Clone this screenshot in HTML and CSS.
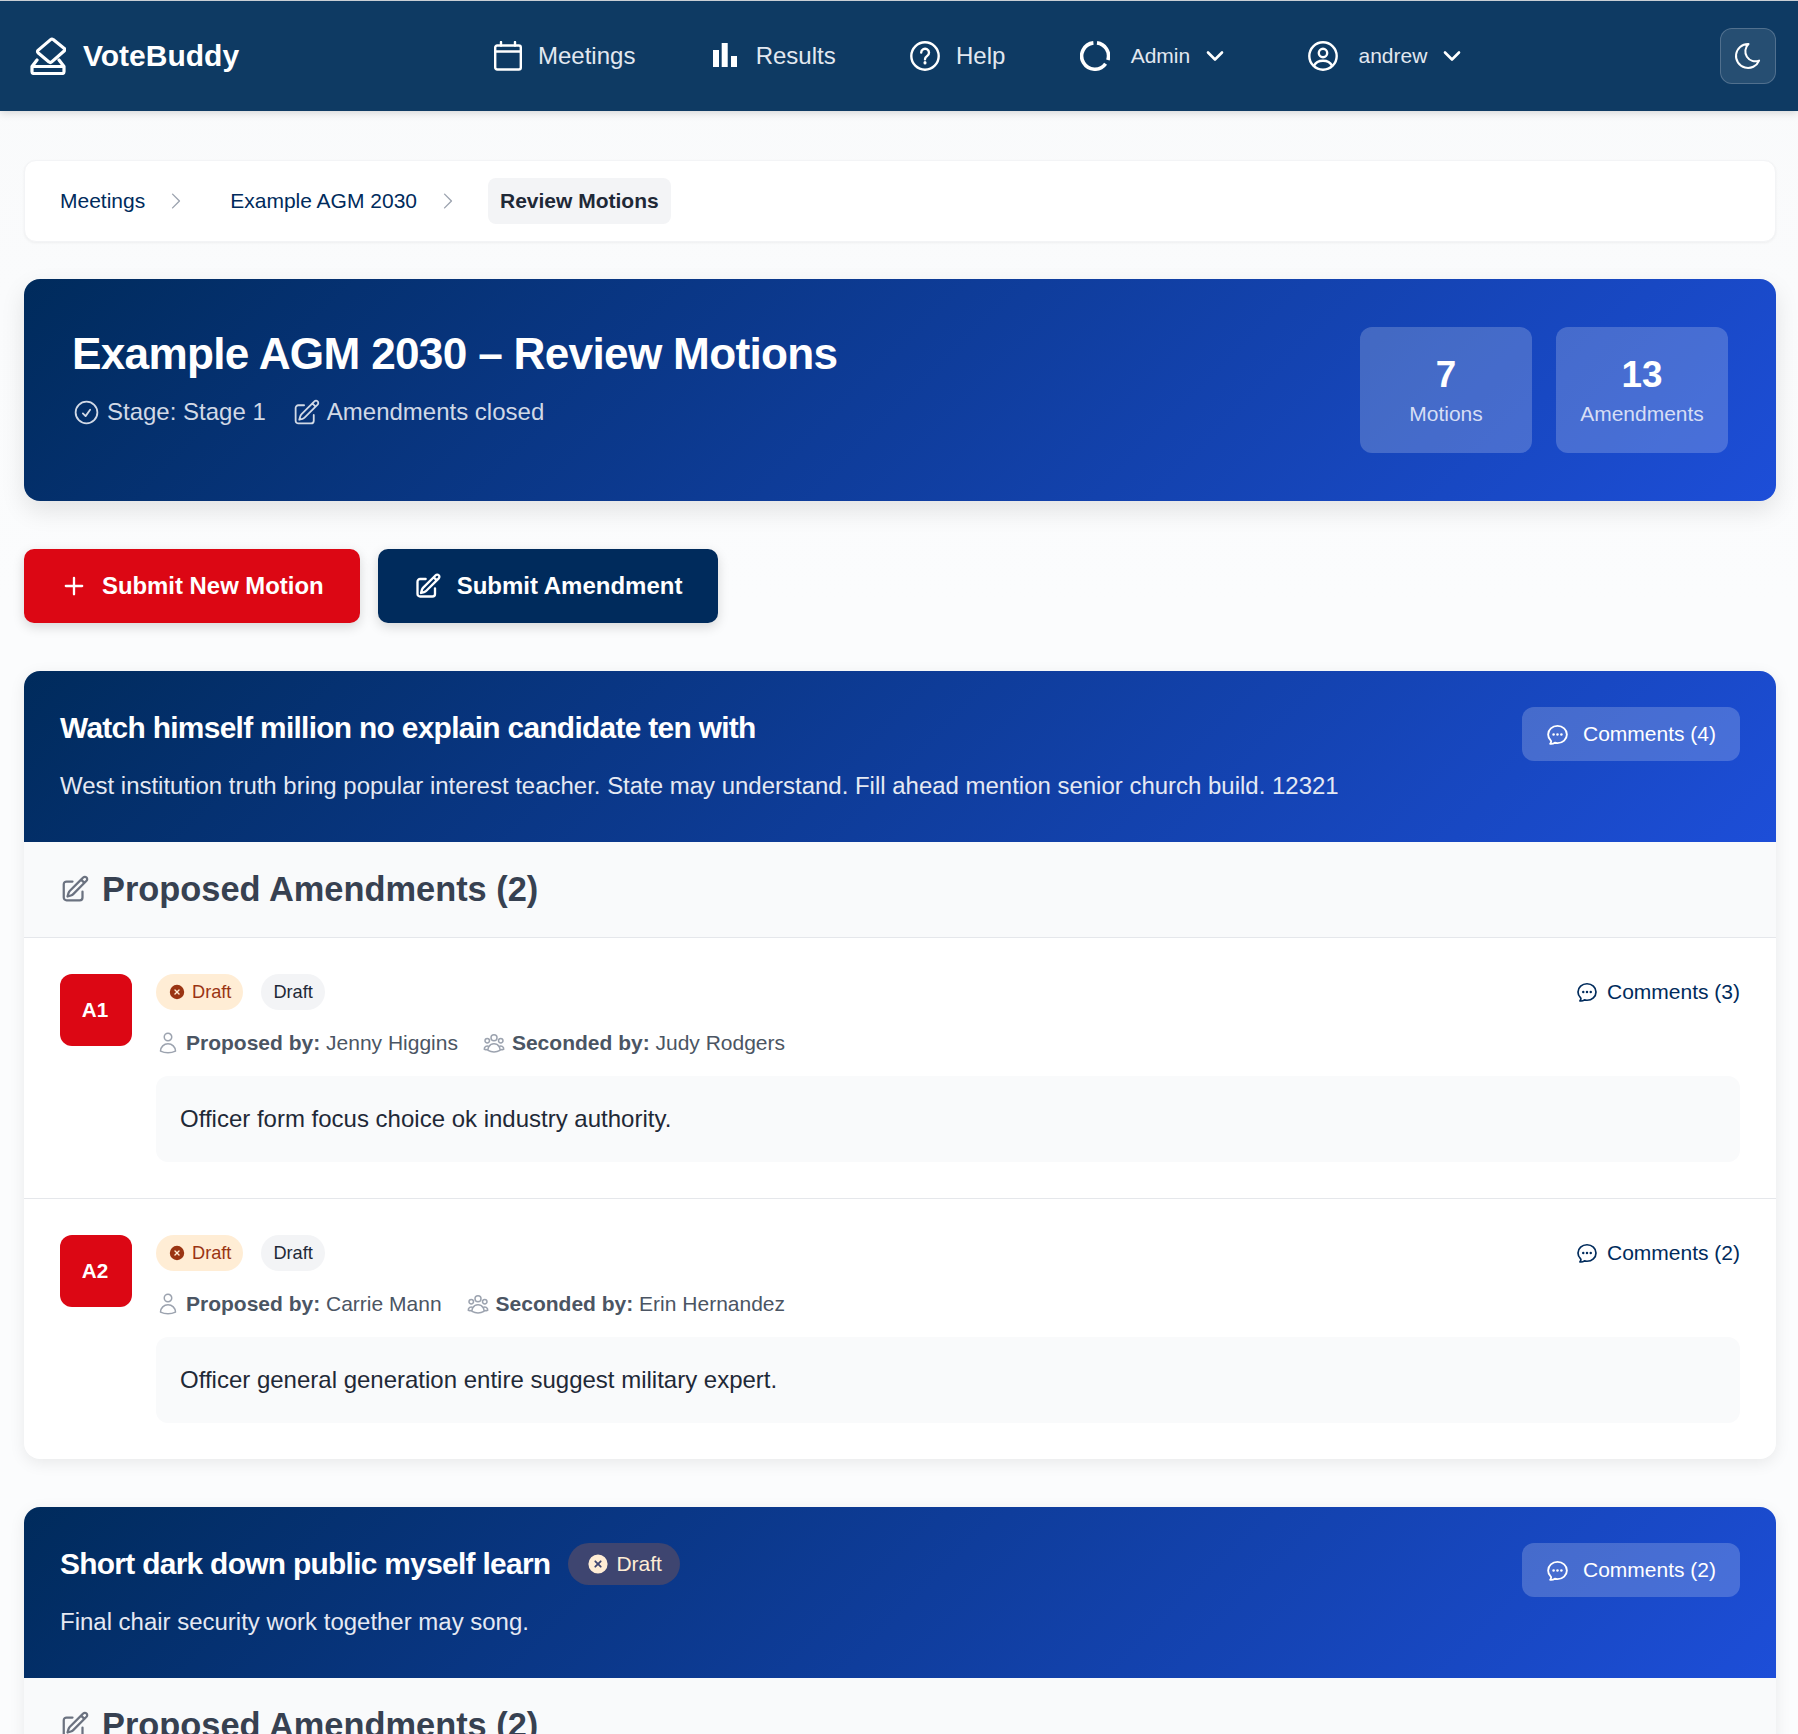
FILE: index.html
```html
<!DOCTYPE html>
<html lang="en">
<head>
<meta charset="utf-8">
<title>VoteBuddy</title>
<link rel="stylesheet" href="styles.css">
</head>
<body>
<svg class="sprite" aria-hidden="true">
  <symbol id="i-pencil" viewBox="0 0 24 24"><path d="m16.862 4.487 1.687-1.688a1.875 1.875 0 1 1 2.652 2.652L10.582 16.07a4.5 4.5 0 0 1-1.897 1.13L6 18l.8-2.685a4.5 4.5 0 0 1 1.13-1.897l8.932-8.931Zm0 0L19.5 7.125M18 14v4.75A2.25 2.25 0 0 1 15.75 21H5.25A2.25 2.25 0 0 1 3 18.75V8.25A2.25 2.25 0 0 1 5.25 6H10"/></symbol>
  <symbol id="i-chat" viewBox="0 0 24 24"><path d="M8.625 12a.375.375 0 1 1-.75 0 .375.375 0 0 1 .75 0Zm0 0H8.25m4.125 0a.375.375 0 1 1-.75 0 .375.375 0 0 1 .75 0Zm0 0H12m4.125 0a.375.375 0 1 1-.75 0 .375.375 0 0 1 .75 0Zm0 0h-.375M21 12c0 4.556-4.03 8.25-9 8.25a9.764 9.764 0 0 1-2.555-.337A5.972 5.972 0 0 1 5.41 20.97a5.969 5.969 0 0 1-.474-.065 4.48 4.48 0 0 0 .978-2.025c.09-.457-.133-.901-.467-1.226C3.93 16.178 3 14.189 3 12c0-4.556 4.03-8.25 9-8.25s9 3.694 9 8.25Z"/></symbol>
  <symbol id="i-user" viewBox="0 0 24 24"><path d="M15.75 6a3.75 3.75 0 1 1-7.5 0 3.75 3.75 0 0 1 7.5 0ZM4.501 20.118a7.5 7.5 0 0 1 14.998 0A17.933 17.933 0 0 1 12 21.75c-2.676 0-5.216-.584-7.499-1.632Z"/></symbol>
  <symbol id="i-group" viewBox="0 0 24 24"><path d="M18 18.72a9.094 9.094 0 0 0 3.741-.479 3 3 0 0 0-4.682-2.72m.94 3.198.001.031c0 .225-.012.447-.037.666A11.944 11.944 0 0 1 12 21c-2.17 0-4.207-.576-5.963-1.584A6.062 6.062 0 0 1 6 18.719m12 0a5.971 5.971 0 0 0-.941-3.197m0 0A5.995 5.995 0 0 0 12 12.75a5.995 5.995 0 0 0-5.058 2.772m0 0a3 3 0 0 0-4.681 2.72 8.986 8.986 0 0 0 3.74.477m.94-3.197a5.971 5.971 0 0 0-.94 3.197M15 6.75a3 3 0 1 1-6 0 3 3 0 0 1 6 0Zm6 3a2.25 2.25 0 1 1-4.5 0 2.25 2.25 0 0 1 4.5 0Zm-13.5 0a2.25 2.25 0 1 1-4.5 0 2.25 2.25 0 0 1 4.5 0Z"/></symbol>
  <symbol id="i-x" viewBox="0 0 20 20"><path class="solid" fill-rule="evenodd" d="M10 18a8 8 0 1 0 0-16 8 8 0 0 0 0 16ZM8.28 7.22a.75.75 0 0 0-1.06 1.06L8.94 10l-1.72 1.72a.75.75 0 1 0 1.06 1.06L10 11.06l1.72 1.72a.75.75 0 1 0 1.06-1.06L11.06 10l1.72-1.72a.75.75 0 0 0-1.06-1.06L10 8.94 8.28 7.22Z"/></symbol>
  <symbol id="i-down" viewBox="0 0 24 24"><path d="m5 8.500 7 7 7-7"/></symbol>
  <symbol id="i-right" viewBox="0 0 24 24"><path d="m8.250 4.500 7.500 7.500-7.500 7.500"/></symbol>
</svg>

<header class="navbar">
  <a class="brand">
    <svg class="brand-icon" viewBox="0 0 36 38"><path d="M23.200 2.600 34.300 11.500a1.500 1.500 0 0 1 .1 2.200L21.700 24.900a2 2 0 0 1-2.700 0L8 15.700a1.600 1.600 0 0 1 0-2.300L20.600 2.600a2 2 0 0 1 2.600 0Z"/><path d="M7 23 2 29.500v5.200A1.800 1.800 0 0 0 3.800 36.500h28.400a1.800 1.800 0 0 0 1.800-1.800v-5.200L29 23M2 29.500h32"/></svg>
    <span class="brand-name">VoteBuddy</span>
  </a>
  <nav class="nav-links">
    <a class="nav-link">
      <svg class="nav-icon" viewBox="0 0 30 30"><rect x="3.200" y="4.500" width="25.600" height="24" rx="2"/><path d="M3.200 10.500h25.600M9 1v3.500M23 1v3.500"/></svg>
      Meetings
    </a>
    <a class="nav-link">
      <svg class="nav-icon nav-icon-solid" viewBox="0 0 30 30"><rect x="3" y="9" width="6" height="17"/><rect x="11.700" y="2" width="6" height="24"/><rect x="21" y="15" width="6" height="11"/></svg>
      Results
    </a>
    <a class="nav-link">
      <svg class="nav-icon" viewBox="0 0 30 30"><circle cx="15" cy="15" r="13.700"/><path d="M11.200 11.600a3.900 3.900 0 1 1 5.900 3.400c-1.300.8-2.100 1.600-2.100 3.200"/><path class="dot" d="M15 21.400v.6"/></svg>
      Help
    </a>
    <a class="nav-link nav-drop nav-admin">
      <svg class="nav-icon nav-icon-heavy" viewBox="0 0 30 30"><path d="M17 1.900A13.200 13.200 0 0 1 27.900 19"/><path d="M25.600 22.700A13.200 13.200 0 1 1 13.400 1.900"/></svg>
      Admin
      <svg class="chevron"><use href="#i-down"/></svg>
    </a>
    <a class="nav-link nav-drop">
      <svg class="nav-icon" viewBox="0 0 30 30"><circle cx="15" cy="15" r="13.700"/><circle cx="15" cy="12" r="4.200"/><path d="M6 24.800c1.600-3.400 5-5 9-5s7.400 1.600 9 5"/></svg>
      andrew
      <svg class="chevron"><use href="#i-down"/></svg>
    </a>
  </nav>
  <button class="theme-btn" type="button" aria-label="Toggle theme">
    <svg class="moon" viewBox="0 0 24 24"><path d="M12 3c.132 0 .263 0 .393 0a7.500 7.500 0 0 0 7.920 12.446a9 9 0 1 1 -8.313 -12.454z"/></svg>
  </button>
</header>

<main class="page">
  <nav class="breadcrumb">
    <a class="crumb">Meetings</a>
    <svg class="crumb-sep"><use href="#i-right"/></svg>
    <a class="crumb">Example AGM 2030</a>
    <svg class="crumb-sep"><use href="#i-right"/></svg>
    <span class="crumb crumb-current">Review Motions</span>
  </nav>

  <section class="hero">
    <div class="hero-text">
      <h1 class="hero-title">Example AGM 2030 – Review Motions</h1>
      <div class="hero-meta">
        <span class="hero-meta-item"><svg class="hero-icon" viewBox="0 0 24 24"><path d="M9 12.750 11.250 15 15 9.750M21 12a9 9 0 1 1-18 0 9 9 0 0 1 18 0Z"/></svg>Stage: Stage 1</span>
        <span class="hero-meta-item"><svg class="hero-icon"><use href="#i-pencil"/></svg>Amendments closed</span>
      </div>
    </div>
    <div class="stats">
      <div class="stat"><div class="stat-num">7</div><div class="stat-label">Motions</div></div>
      <div class="stat"><div class="stat-num">13</div><div class="stat-label">Amendments</div></div>
    </div>
  </section>

  <div class="actions">
    <a class="btn btn-red"><svg class="btn-icon" viewBox="0 0 24 24"><path d="M12 5v14m7-7h-14"/></svg>Submit New Motion</a>
    <a class="btn btn-navy"><svg class="btn-icon"><use href="#i-pencil"/></svg>Submit Amendment</a>
  </div>

  <article class="motion">
    <div class="motion-head">
      <div class="motion-info">
        <div class="motion-title-row"><h2 class="motion-title">Watch himself million no explain candidate ten with</h2></div>
        <p class="motion-desc">West institution truth bring popular interest teacher. State may understand. Fill ahead mention senior church build. 12321</p>
      </div>
      <a class="comments-btn"><svg class="comments-icon"><use href="#i-chat"/></svg>Comments (4)</a>
    </div>
    <div class="section-head"><svg class="section-icon"><use href="#i-pencil"/></svg><h3 class="section-title">Proposed Amendments (2)</h3></div>
    <div class="amendment">
      <div class="badge">A1</div>
      <div class="am-body">
        <div class="am-top">
          <span class="pill pill-orange"><svg class="pill-icon"><use href="#i-x"/></svg>Draft</span>
          <span class="pill pill-grey">Draft</span>
          <a class="am-comments"><svg class="am-comments-icon"><use href="#i-chat"/></svg>Comments (3)</a>
        </div>
        <div class="am-meta">
          <span class="am-person"><svg class="person-icon"><use href="#i-user"/></svg><span><b>Proposed by:</b> Jenny Higgins</span></span>
          <span class="am-person"><svg class="person-icon"><use href="#i-group"/></svg><span><b>Seconded by:</b> Judy Rodgers</span></span>
        </div>
        <div class="am-text">Officer form focus choice ok industry authority.</div>
      </div>
    </div>
    <div class="amendment">
      <div class="badge">A2</div>
      <div class="am-body">
        <div class="am-top">
          <span class="pill pill-orange"><svg class="pill-icon"><use href="#i-x"/></svg>Draft</span>
          <span class="pill pill-grey">Draft</span>
          <a class="am-comments"><svg class="am-comments-icon"><use href="#i-chat"/></svg>Comments (2)</a>
        </div>
        <div class="am-meta">
          <span class="am-person"><svg class="person-icon"><use href="#i-user"/></svg><span><b>Proposed by:</b> Carrie Mann</span></span>
          <span class="am-person"><svg class="person-icon"><use href="#i-group"/></svg><span><b>Seconded by:</b> Erin Hernandez</span></span>
        </div>
        <div class="am-text">Officer general generation entire suggest military expert.</div>
      </div>
    </div>
  </article>

  <article class="motion">
    <div class="motion-head">
      <div class="motion-info">
        <div class="motion-title-row"><h2 class="motion-title">Short dark down public myself learn</h2><span class="pill-head"><svg class="pill-head-icon"><use href="#i-x"/></svg>Draft</span></div>
        <p class="motion-desc">Final chair security work together may song.</p>
      </div>
      <a class="comments-btn"><svg class="comments-icon"><use href="#i-chat"/></svg>Comments (2)</a>
    </div>
    <div class="section-head"><svg class="section-icon"><use href="#i-pencil"/></svg><h3 class="section-title">Proposed Amendments (2)</h3></div>
  </article>
</main>
</body>
</html>
```

FILE: styles.css
```css
* { box-sizing: border-box; }
html { overflow: hidden; height: 100%; }
body {
  margin: 0;
  height: 1734px;
  overflow: hidden;
  background: linear-gradient(180deg, #f9fafb 0, #fbfcfd 600px);
  font-family: "Liberation Sans", Arial, sans-serif;
  color: #1f2937;
}
h1, h2, h3, p { margin: 0; }
svg { flex: none; display: block; fill: none; stroke: currentColor; stroke-linecap: round; stroke-linejoin: round; }
.sprite { position: absolute; width: 0; height: 0; overflow: hidden; }
.solid { fill: currentColor; stroke: none; }

/* Navbar */
.navbar {
  height: 111px;
  border-top: 1px solid #c9ced4;
  background: #0e3a63;
  box-shadow: 0 2px 8px rgba(0,0,0,.15);
  padding: 0 22px 0 30px;
  display: flex;
  align-items: center;
  color: #fff;
}
.brand { display: flex; align-items: center; gap: 17px; width: 209px; }
.brand-icon { width: 36px; height: 38px; stroke-width: 3.2; }
.brand-name { font-size: 30px; font-weight: 700; }
.nav-links { display: flex; align-items: center; gap: 74.3px; margin-left: 253px; }
.nav-link { display: flex; align-items: center; gap: 16px; font-size: 24px; color: #e2e8f0; }
.nav-icon { width: 30px; height: 30px; stroke-width: 2.4; color: #fff; }
.nav-icon-solid { fill: #fff; stroke: none; }
.nav-icon-heavy { stroke-width: 3.6; stroke-linecap: butt; }
.dot { stroke-width: 3; }
.nav-drop { font-size: 21px; gap: 21px; }
.nav-admin { margin-right: 6px; }
.chevron { width: 24px; height: 24px; stroke-width: 2.6; margin-left: -8px; color: #fff; }
.theme-btn {
  margin-left: auto;
  width: 56px;
  height: 56px;
  border-radius: 12px;
  background: rgba(255,255,255,.1);
  border: 1px solid rgba(255,255,255,.2);
  color: #fff;
  display: flex;
  align-items: center;
  justify-content: center;
  padding: 0;
}
.moon { width: 32px; height: 32px; stroke-width: 1.5; }

/* Page */
.page { padding: 49px 22px 0 24px; }
.breadcrumb {
  height: 82px;
  background: #fff;
  border: 1px solid #f3f4f6;
  border-radius: 12px;
  box-shadow: 0 1px 3px rgba(0,0,0,.05);
  padding: 0 12px 0 23px;
  display: flex;
  align-items: center;
  font-size: 21px;
  color: #002b5c;
}
.crumb { padding: 0 12px; line-height: 46px; }
.crumb-current { background: #f3f4f6; border-radius: 8px; color: #1f2937; font-weight: 700; margin-left: -2px; }
.crumb-sep { width: 22px; height: 22px; margin: 0 31px 0 8px; color: #9ca3af; stroke-width: 1.5; }

.hero {
  margin-top: 37px;
  height: 222px;
  padding: 48px;
  border-radius: 16px;
  background: linear-gradient(135deg, #002b5c, #1d4ed8);
  box-shadow: 0 10px 25px rgba(0,0,0,.1);
  color: #fff;
  display: flex;
  justify-content: space-between;
}
.hero-title { font-size: 44.16px; line-height: 54px; font-weight: 700; letter-spacing: -.7px; }
.hero-meta { display: flex; gap: 26px; margin-top: 15px; font-size: 24px; line-height: 32px; color: #d1d9e6; }
.hero-meta-item { display: flex; align-items: center; gap: 6px; }
.hero-icon { width: 29px; height: 29px; stroke-width: 1.5; }
.stats { display: flex; gap: 24px; }
.stat {
  width: 172px;
  height: 126px;
  border-radius: 12px;
  background: rgba(255,255,255,.2);
  text-align: center;
  padding-top: 26px;
}
.stat-num { font-size: 36.8px; font-weight: 700; line-height: 44px; }
.stat-label { font-size: 21px; line-height: 28px; color: #d6def5; margin-top: 3px; }

.actions { display: flex; gap: 18px; margin-top: 48px; }
.btn {
  height: 74px;
  border-radius: 10px;
  padding: 0 36px;
  display: flex;
  align-items: center;
  gap: 14px;
  color: #fff;
  font-size: 23.9px;
  font-weight: 700;
  box-shadow: 0 4px 12px rgba(0,0,0,.15);
}
.btn-red { background: #dc0714; }
.btn-navy { background: #002b5c; font-size: 24px; gap: 15px; }
.btn-icon { width: 28px; height: 28px; stroke-width: 2; }

/* Motion cards */
.motion {
  margin-top: 48px;
  border-radius: 16px;
  background: #fff;
  box-shadow: 0 4px 16px rgba(0,0,0,.08);
  overflow: hidden;
}
.motion-head {
  height: 171px;
  padding: 36px;
  background: linear-gradient(135deg, #002b5c, #1d4ed8);
  color: #fff;
  display: flex;
  justify-content: space-between;
  align-items: flex-start;
}
.motion-title-row { display: flex; align-items: center; gap: 18px; height: 42px; }
.motion-title { font-size: 29.9px; line-height: 40px; font-weight: 700; letter-spacing: -.7px; }
.motion-desc { margin-top: 19px; font-size: 23.98px; line-height: 36px; color: #e5e9f3; }
.comments-btn {
  height: 54px;
  width: 218px;
  flex: none;
  border-radius: 12px;
  background: rgba(255,255,255,.2);
  display: flex;
  align-items: center;
  justify-content: center;
  gap: 13px;
  padding-right: 1px;
  font-size: 21px;
}
.comments-icon { width: 25px; height: 25px; stroke-width: 1.8; }
.pill-head {
  height: 42px;
  padding: 0 18px;
  border-radius: 21px;
  background: #3e4570;
  color: #ffedd5;
  display: flex;
  align-items: center;
  gap: 6px;
  font-size: 21px;
}
.pill-head-icon { width: 24px; height: 24px; }

.section-head {
  height: 96px;
  padding: 0 36px 2px;
  background: #f9fafb;
  border-bottom: 1px solid #e5e7eb;
  display: flex;
  align-items: center;
  gap: 12px;
  color: #374151;
}
.section-icon { width: 30px; height: 30px; color: #6b7280; stroke-width: 1.8; }
.section-title { font-size: 34.4px; font-weight: 700; line-height: 44px; }

.amendment { padding: 36px; display: flex; gap: 24px; border-bottom: 1px solid #e5e7eb; }
.amendment:last-child { border-bottom: 0; }
.badge {
  width: 72px;
  height: 72px;
  flex: none;
  border-radius: 12px;
  background: #dc0714;
  color: #fff;
  font-size: 20.7px;
  font-weight: 700;
  display: flex;
  align-items: center;
  justify-content: center;
  padding-right: 2px;
}
.am-body { flex: 1; min-width: 0; }
.am-top { display: flex; align-items: center; gap: 18px; height: 36px; }
.pill {
  height: 36px;
  padding: 0 12px;
  border-radius: 18px;
  display: flex;
  align-items: center;
  gap: 6px;
  font-size: 18.2px;
}
.pill-orange { background: #ffedd5; color: #9a3412; }
.pill-grey { background: #f3f4f6; color: #1f2937; }
.pill-icon { width: 18px; height: 18px; }
.am-comments { margin-left: auto; display: flex; align-items: center; gap: 8px; font-size: 21px; color: #002b5c; }
.am-comments-icon { width: 24px; height: 24px; stroke-width: 1.7; }
.am-meta { display: flex; gap: 24px; margin-top: 18px; height: 30px; align-items: center; font-size: 21px; color: #4b5563; }
.am-person { display: flex; align-items: center; gap: 6px; }
.person-icon { width: 24px; height: 24px; color: #9ca3af; stroke-width: 1.5; }
.am-text {
  margin-top: 18px;
  height: 86px;
  padding: 0 24px;
  border-radius: 12px;
  background: #f9fafb;
  font-size: 24px;
  color: #1f2937;
  display: flex;
  align-items: center;
}
```
